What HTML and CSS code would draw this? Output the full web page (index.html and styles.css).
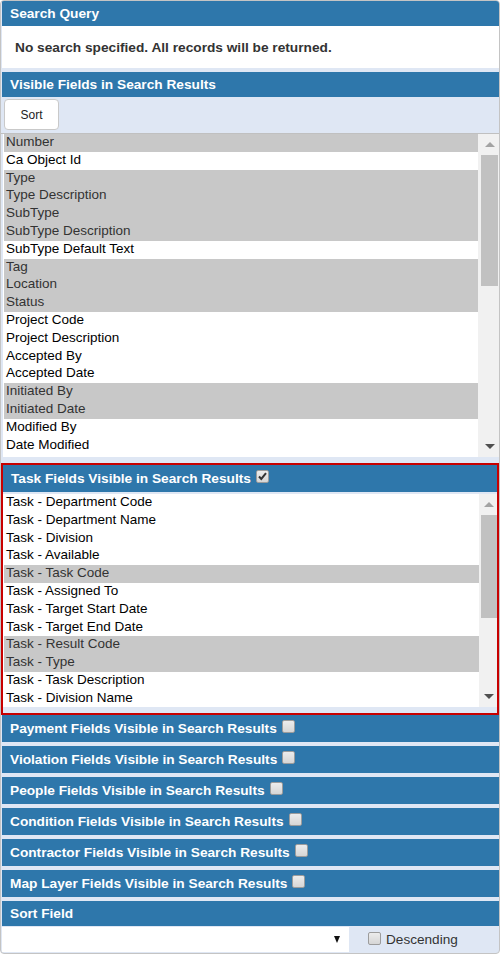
FILE: index.html
```html
<!DOCTYPE html>
<html>
<head>
<meta charset="utf-8">
<link rel="stylesheet" href="styles.css">
</head>
<body>
<div class="panel">
  <div class="hdr short">Search Query</div>
  <div class="msg">No search specified. All records will be returned.</div>
  <div class="hdr short gap-top">Visible Fields in Search Results</div>
  <div class="toolbar"><button class="btn">Sort</button></div>
  <div class="listbox main">
    <div class="opts">
      <div class="opt sel">Number</div>
      <div class="opt">Ca Object Id</div>
      <div class="opt sel">Type</div>
      <div class="opt sel">Type Description</div>
      <div class="opt sel">SubType</div>
      <div class="opt sel">SubType Description</div>
      <div class="opt">SubType Default Text</div>
      <div class="opt sel">Tag</div>
      <div class="opt sel">Location</div>
      <div class="opt sel">Status</div>
      <div class="opt">Project Code</div>
      <div class="opt">Project Description</div>
      <div class="opt">Accepted By</div>
      <div class="opt">Accepted Date</div>
      <div class="opt sel">Initiated By</div>
      <div class="opt sel">Initiated Date</div>
      <div class="opt">Modified By</div>
      <div class="opt">Date Modified</div>
      <div class="opt">Issued By</div>
    </div>
    <div class="sb">
      <div class="sb-btn"><span class="tri up"></span></div>
      <div class="sb-track"><div class="thumb thumb-main"></div></div>
      <div class="sb-btn"><span class="tri down"></span></div>
    </div>
  </div>
  <div class="task">
    <div class="hdr tall in-task">Task Fields Visible in Search Results <span class="cb checked"><svg viewBox="0 0 13 13" width="13" height="13"><path d="M3 6.5 L5.3 9 L10 3.2" fill="none" stroke="#333" stroke-width="2"/></svg></span></div>
    <div class="listbox tasklist">
      <div class="opts">
        <div class="opt">Task - Department Code</div>
        <div class="opt">Task - Department Name</div>
        <div class="opt">Task - Division</div>
        <div class="opt">Task - Available</div>
        <div class="opt sel">Task - Task Code</div>
        <div class="opt">Task - Assigned To</div>
        <div class="opt">Task - Target Start Date</div>
        <div class="opt">Task - Target End Date</div>
        <div class="opt sel">Task - Result Code</div>
        <div class="opt sel">Task - Type</div>
        <div class="opt">Task - Task Description</div>
        <div class="opt">Task - Division Name</div>
      </div>
      <div class="sb">
        <div class="sb-btn"><span class="tri up"></span></div>
        <div class="sb-track"><div class="thumb thumb-task"></div></div>
        <div class="sb-btn"><span class="tri down"></span></div>
      </div>
    </div>
  </div>
  <div class="hdr tall">Payment Fields Visible in Search Results <span class="cb"></span></div>
  <div class="hdr tall gap-top">Violation Fields Visible in Search Results <span class="cb"></span></div>
  <div class="hdr tall gap-top">People Fields Visible in Search Results <span class="cb"></span></div>
  <div class="hdr tall gap-top">Condition Fields Visible in Search Results <span class="cb"></span></div>
  <div class="hdr tall gap-top">Contractor Fields Visible in Search Results <span class="cb"></span></div>
  <div class="hdr tall gap-top">Map Layer Fields Visible in Search Results <span class="cb"></span></div>
  <div class="hdr short gap-top">Sort Field</div>
  <div class="sortrow">
    <div class="select"><span class="sel-arrow"></span></div>
    <label class="desc"><span class="cb"></span>Descending</label>
  </div>
</div>
</body>
</html>
```
FILE: styles.css
```css
* { box-sizing: border-box; }
html, body { margin: 0; padding: 0; background: #fff; }
body { font-family: "Liberation Sans", Arial, sans-serif; }

.panel {
  width: 500px;
  height: 954px;
  border: 1px solid #c4c4c4;
  border-radius: 4px;
  background: #dfe7f4;
  overflow: hidden;
  display: flex;
  flex-direction: column;
}

.hdr {
  background: #2e77ab;
  color: #fff;
  font-weight: bold;
  font-size: 13.7px;
  padding: 0 8px;
  margin-left: 1px;
  display: flex;
  align-items: center;
  gap: 5px;
  white-space: nowrap;
  flex: none;
}
.hdr.short { height: 25px; }
.hdr.tall { height: 27px; }
.gap-top { margin-top: 4px; }

.msg {
  background: #fff;
  height: 42px;
  margin-left: 1px;
  display: flex;
  align-items: center;
  padding-left: 13px;
  font-weight: bold;
  font-size: 13.7px;
  color: #333;
  flex: none;
}

.toolbar {
  height: 37px;
  padding: 2px 0 0 3px;
  border-bottom: 1px solid #c0c0c0;
  flex: none;
}
.btn {
  width: 55px;
  height: 31px;
  background: #fff;
  border: 1px solid #c9c9c9;
  border-radius: 4px;
  font-family: "Liberation Sans", Arial, sans-serif;
  font-size: 12px;
  color: #222;
  padding: 0;
}

.listbox {
  display: flex;
  background: #fff;
  overflow: hidden;
  flex: none;
}
.listbox.main { height: 323px; margin-left: 2px; }
.opts { flex: 1; padding-left: 1px; overflow: hidden; }
.opt {
  height: 17.8px;
  line-height: 16.8px;
  font-size: 13.5px;
  color: #000;
  padding-left: 2px;
  white-space: nowrap;
}
.opt.sel { background: #c8c8c8; color: #333; }

.sb {
  width: 21px;
  background: #f1f1f1;
  display: flex;
  flex-direction: column;
  padding-left: 3px;
}
.sb-btn {
  height: 21px;
  display: flex;
  align-items: center;
  justify-content: center;
}
.sb-track { flex: 1; }
.thumb { background: #c1c1c1; width: 17px; }
.thumb-main { height: 131px; }
.thumb-task { height: 103px; }
.tri { width: 0; height: 0; border-left: 5px solid transparent; border-right: 5px solid transparent; }
.tri.up { border-bottom: 5px solid #a3a3a3; }
.tri.down { border-top: 5px solid #505050; }

.task {
  margin-top: 6px;
  border: 2px solid #c80000;
  height: 252px;
  display: flex;
  flex-direction: column;
  flex: none;
}
.hdr.in-task { margin-left: 0; padding-left: 8px; }
.listbox.tasklist { height: 213px; margin-top: 2px; }
.tasklist .sb { width: 18px; padding-left: 2px; }
.tasklist .thumb { width: 16px; }

.cb {
  display: inline-block;
  width: 13px;
  height: 13px;
  border: 1px solid #9c9c9c;
  border-radius: 2px;
  background: linear-gradient(#ececec, #d6d6d6);
  margin-bottom: 5px;
  flex: none;
}
.cb svg { display: block; margin: -1px; }

.sortrow {
  height: 27px;
  display: flex;
  align-items: stretch;
  padding: 1px 0;
  flex: none;
}
.select {
  width: 347px;
  margin-left: 1px;
  background: #fff;
  display: flex;
  align-items: center;
  justify-content: flex-end;
  padding-right: 9px;
}
.sel-arrow {
  width: 0; height: 0;
  border-left: 3.5px solid transparent;
  border-right: 3.5px solid transparent;
  border-top: 7px solid #111;
}
.desc {
  display: flex;
  align-items: center;
  padding-left: 19px;
  font-size: 13.6px;
  color: #333;
}
.desc .cb { margin: 0 5px 2px 0; }
```
